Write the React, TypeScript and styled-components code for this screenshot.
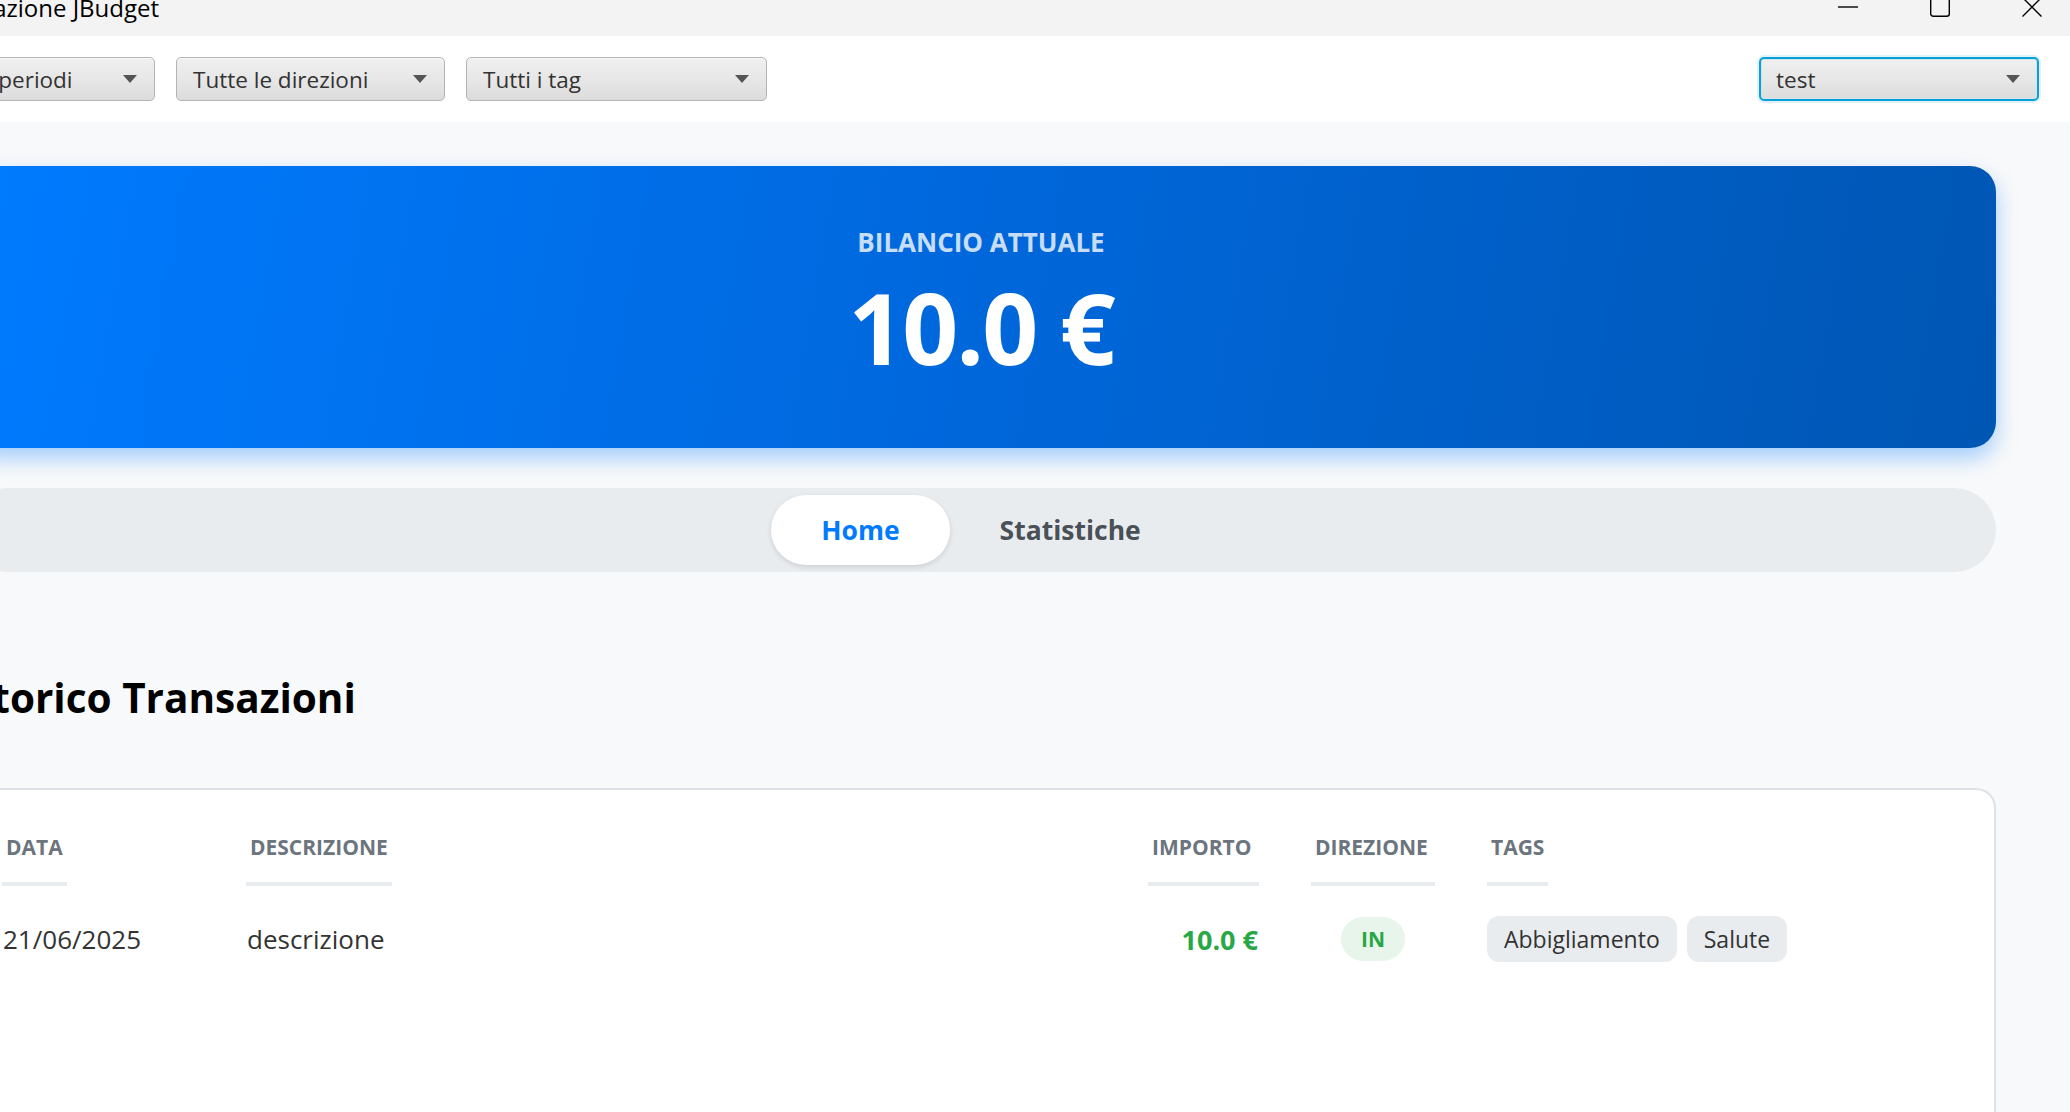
import React from "react";
import styled, { createGlobalStyle } from "styled-components";

const GlobalStyle = createGlobalStyle`
  html, body {
    margin: 0;
    padding: 0;
    background: #f8f9fa;
    overflow: hidden;
  }
  body {
    font-family: "Open Sans", "Noto Sans", sans-serif;
  }
  * { box-sizing: border-box; }
`;

const Window = styled.div`
  width: 2070px;
  height: 1112px;
  display: flex;
  flex-direction: column;
  overflow: hidden;
  background: #f8f9fa;
`;

const TitleBar = styled.div`
  height: 36px;
  flex: none;
  background: #f3f3f3;
  display: flex;
  justify-content: space-between;
  align-items: flex-start;
  overflow: hidden;
`;

const TitleText = styled.div`
  margin-left: -75px;
  margin-top: -8px;
  font-size: 24px;
  line-height: 32px;
  color: #000;
  white-space: nowrap;
`;

const Controls = styled.div`
  display: flex;
  margin-right: -8px;
  margin-top: -3px;
`;

const ControlButton = styled.div`
  width: 92px;
  height: 20px;
  display: flex;
  justify-content: center;
  align-items: center;
`;

const Toolbar = styled.div`
  height: 86px;
  flex: none;
  background: #fff;
  display: flex;
  align-items: center;
  gap: 21px;
  margin-left: -84px;
  padding-right: 31px;
`;

const Combo = styled.div<{ $w: number; $focused?: boolean }>`
  width: ${(p) => p.$w}px;
  height: 44px;
  flex: none;
  display: flex;
  align-items: center;
  justify-content: space-between;
  padding: 0 17px 0 ${(p) => (p.$focused ? 15 : 16)}px;
  border-radius: 5px;
  border: ${(p) => (p.$focused ? "2px solid #0a9fd6" : "1px solid #b4b4b4")};
  background: linear-gradient(to bottom, #f0f0f0 0%, #e6e6e6 55%, #dcdcdc 100%);
  box-shadow: ${(p) =>
    p.$focused
      ? "0 0 0 2px rgba(10,159,214,0.12), inset 0 0 0 1px #cfe6ef"
      : "inset 0 1px 0 #f9f9f9"};
  font-size: 22.5px;
  color: #333;
  white-space: nowrap;
`;

const Arrow = styled.span`
  width: 0;
  height: 0;
  border-left: 7px solid transparent;
  border-right: 7px solid transparent;
  border-top: 8px solid #555;
  flex: none;
`;

const Spacer = styled.div`
  flex: 1;
`;

const Main = styled.div`
  flex: 1;
  min-height: 0;
  display: flex;
  flex-direction: column;
  margin-left: -34px;
  padding: 44px 74px 0 0;
`;

const Banner = styled.div`
  height: 282px;
  flex: none;
  border-radius: 26px;
  background: linear-gradient(100deg, #007bff 0%, #0069df 45%, #0056b3 100%);
  box-shadow: 0 10px 22px rgba(0, 123, 255, 0.35);
  display: flex;
  flex-direction: column;
  align-items: center;
  padding-top: 59px;
`;

const BalanceLabel = styled.div`
  font-size: 26px;
  line-height: 35px;
  font-weight: 700;
  color: rgba(255, 255, 255, 0.8);
`;

const BalanceValue = styled.div`
  font-size: 98px;
  line-height: 133px;
  margin-top: 1px;
  font-weight: 700;
  letter-spacing: -2px;
  color: #fff;
`;

const TabBar = styled.div`
  margin-top: 40px;
  height: 84px;
  flex: none;
  border-radius: 42px;
  background: #e9ecef;
  display: flex;
  justify-content: center;
  align-items: center;
`;

const Tab = styled.div<{ $active?: boolean }>`
  height: 70px;
  padding: 0 50px;
  border-radius: 35px;
  display: flex;
  align-items: center;
  font-size: 26.5px;
  font-weight: 700;
  color: ${(p) => (p.$active ? "#007bff" : "#495057")};
  background: ${(p) => (p.$active ? "#fff" : "transparent")};
  box-shadow: ${(p) => (p.$active ? "0 2px 5px rgba(0,0,0,0.12)" : "none")};
`;

const Heading = styled.h2`
  margin: 97px 0 0 4px;
  font-size: 40.5px;
  line-height: 58px;
  font-weight: 700;
  color: #000;
`;

const Card = styled.div`
  margin-top: 61px;
  flex: 1;
  background: #fff;
  border: 2px solid #dee2e6;
  border-bottom: none;
  border-radius: 20px 20px 0 0;
  padding: 43px 38px 0 34px;
`;

const columns = "192px 850px 111px 124px 1fr";

const HeaderRow = styled.div`
  display: grid;
  grid-template-columns: ${columns};
  column-gap: 52px;
  align-items: end;
`;

const HeaderCell = styled.div<{ $full?: boolean }>`
  justify-self: ${(p) => (p.$full ? "stretch" : "start")};
  padding: 0 4px 20px;
  border-bottom: 4px solid #e9ecef;
  font-size: 21px;
  line-height: 29px;
  font-weight: 700;
  color: #6c757d;
  white-space: nowrap;
`;

const DataRow = styled.div`
  margin-top: 30px;
  display: grid;
  grid-template-columns: ${columns};
  column-gap: 52px;
  align-items: center;
  min-height: 46px;
`;

const TextCell = styled.div`
  font-size: 26px;
  color: #333;
  white-space: nowrap;
  padding-left: 1px;
`;

const Amount = styled.div<{ $positive?: boolean }>`
  justify-self: end;
  padding-right: 1px;
  font-size: 27px;
  font-weight: 700;
  color: ${(p) => (p.$positive ? "#28a745" : "#dc3545")};
  white-space: nowrap;
`;

const DirectionBadge = styled.div`
  justify-self: center;
  height: 44px;
  padding: 0 20px;
  border-radius: 22px;
  background: #e8f5eb;
  color: #28a745;
  font-size: 21px;
  font-weight: 700;
  display: flex;
  align-items: center;
`;

const TagList = styled.div`
  display: flex;
  gap: 10px;
`;

const Tag = styled.div`
  height: 46px;
  padding: 0 17px;
  border-radius: 12px;
  background: #e9ecef;
  color: #333;
  font-size: 23px;
  display: flex;
  align-items: center;
  white-space: nowrap;
`;

const MinimizeIcon = () => (
  <svg width="20" height="20" viewBox="0 0 20 20">
    <line x1="0" y1="10" x2="20" y2="10" stroke="#000" strokeWidth="1.4" />
  </svg>
);

const MaximizeIcon = () => (
  <svg width="20" height="20" viewBox="0 0 20 20">
    <rect x="0.7" y="0.7" width="18.6" height="18.6" rx="2.5" fill="none" stroke="#000" strokeWidth="1.4" />
  </svg>
);

const CloseIcon = () => (
  <svg width="20" height="20" viewBox="0 0 20 20">
    <path d="M0.5 0.5 L19.5 19.5 M19.5 0.5 L0.5 19.5" stroke="#000" strokeWidth="1.4" fill="none" />
  </svg>
);

type Tx = {
  date: string;
  description: string;
  amount: string;
  positive: boolean;
  direction: string;
  tags: string[];
};

const transactions: Tx[] = [
  {
    date: "21/06/2025",
    description: "descrizione",
    amount: "10.0 €",
    positive: true,
    direction: "IN",
    tags: ["Abbigliamento", "Salute"],
  },
];

export default function App() {
  return (
    <>
      <GlobalStyle />
      <Window>
        <TitleBar>
          <TitleText>Applicazione JBudget</TitleText>
          <Controls>
            <ControlButton>
              <MinimizeIcon />
            </ControlButton>
            <ControlButton>
              <MaximizeIcon />
            </ControlButton>
            <ControlButton>
              <CloseIcon />
            </ControlButton>
          </Controls>
        </TitleBar>
        <Toolbar>
          <Combo $w={239}>
            Tutti i periodi
            <Arrow />
          </Combo>
          <Combo $w={269}>
            Tutte le direzioni
            <Arrow />
          </Combo>
          <Combo $w={301}>
            Tutti i tag
            <Arrow />
          </Combo>
          <Spacer />
          <Combo $w={280} $focused>
            test
            <Arrow />
          </Combo>
        </Toolbar>
        <Main>
          <Banner>
            <BalanceLabel>BILANCIO ATTUALE</BalanceLabel>
            <BalanceValue>10.0 €</BalanceValue>
          </Banner>
          <TabBar>
            <Tab $active>Home</Tab>
            <Tab>Statistiche</Tab>
          </TabBar>
          <Heading>Storico Transazioni</Heading>
          <Card>
            <HeaderRow>
              <HeaderCell>DATA</HeaderCell>
              <HeaderCell>DESCRIZIONE</HeaderCell>
              <HeaderCell $full>IMPORTO</HeaderCell>
              <HeaderCell $full>DIREZIONE</HeaderCell>
              <HeaderCell>TAGS</HeaderCell>
            </HeaderRow>
            {transactions.map((t) => (
              <DataRow key={t.date + t.description}>
                <TextCell>{t.date}</TextCell>
                <TextCell>{t.description}</TextCell>
                <Amount $positive={t.positive}>{t.amount}</Amount>
                <DirectionBadge>{t.direction}</DirectionBadge>
                <TagList>
                  {t.tags.map((tag) => (
                    <Tag key={tag}>{tag}</Tag>
                  ))}
                </TagList>
              </DataRow>
            ))}
          </Card>
        </Main>
      </Window>
    </>
  );
}
